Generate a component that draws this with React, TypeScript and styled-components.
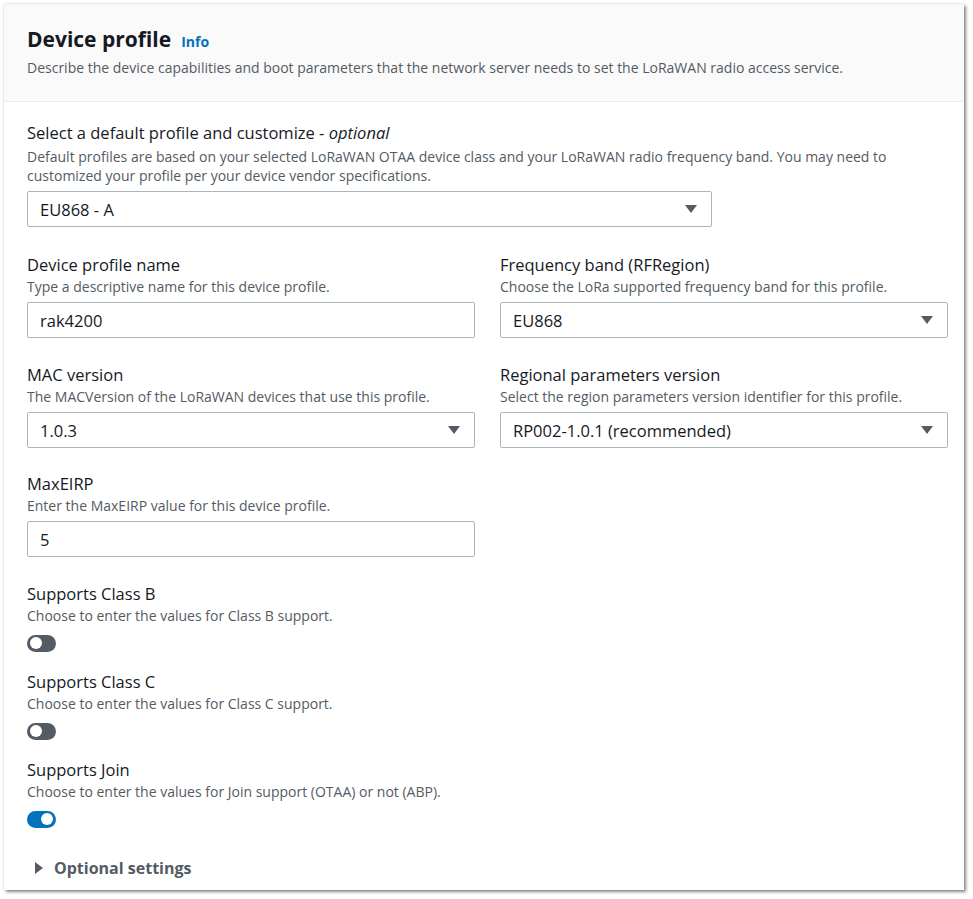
import React from "react";
import styled, { createGlobalStyle } from "styled-components";

const Global = createGlobalStyle`
  html, body { margin: 0; padding: 0; background: #ffffff; }
  body { font-family: "Open Sans", "Noto Sans", Arial, sans-serif; color: #16191f; }
  * { box-sizing: border-box; }
`;

const Page = styled.div`
  padding: 4px 0 0 4px;
  width: 973px;
  height: 899px;
`;

const Card = styled.section`
  width: 960px;
  background: #ffffff;
  box-shadow: 2px 2px 3px rgba(0, 0, 0, 0.45), 0 0 2px rgba(0, 0, 0, 0.2);
  display: flex;
  flex-direction: column;
`;

const Header = styled.header`
  background: #fafafa;
  border-bottom: 1px solid #eaeded;
  padding: 22px 16px 23px 23px;
`;

const TitleRow = styled.div`
  display: flex;
  align-items: baseline;
  gap: 10px;
`;

const Title = styled.h2`
  margin: 0;
  font-size: 21px;
  line-height: 26px;
  font-weight: 700;
  color: #16191f;
`;

const InfoLink = styled.a`
  font-size: 14px;
  font-weight: 700;
  color: #0073bb;
  text-decoration: none;
`;

const HeaderDesc = styled.p`
  margin: 6px 0 0;
  font-size: 14px;
  line-height: 20px;
  color: #545b64;
`;

const Body = styled.div`
  padding: 20px 16px 12px 23px;
  display: flex;
  flex-direction: column;
`;

const Field = styled.div<{ $gap: number }>`
  display: flex;
  flex-direction: column;
  margin-bottom: ${(p) => p.$gap}px;
`;

const Row = styled.div<{ $gap: number }>`
  display: grid;
  grid-template-columns: 448px 448px;
  column-gap: 25px;
  margin-bottom: ${(p) => p.$gap}px;
`;

const Label = styled.label`
  font-size: 16.5px;
  line-height: 22px;
  color: #16191f;
  em { font-style: italic; }
`;

const Desc = styled.div<{ $top?: number }>`
  margin-top: ${(p) => p.$top ?? 1}px;
  font-size: 14px;
  line-height: 19px;
  color: #545b64;
`;

const InputBox = styled.div<{ $width?: number }>`
  margin-top: 6px;
  height: 36px;
  width: ${(p) => (p.$width ? `${p.$width}px` : "100%")};
  border: 1px solid #aab7b8;
  border-radius: 2px;
  background: #ffffff;
  display: flex;
  align-items: center;
  justify-content: space-between;
  padding: 0 14px 0 12px;
  font-size: 16.5px;
  color: #16191f;
`;

const Caret = styled.span`
  width: 0;
  height: 0;
  border-left: 6.5px solid transparent;
  border-right: 6.5px solid transparent;
  border-top: 8.5px solid #545b64;
`;

const ToggleWrap = styled.div`
  margin-top: 9px;
  height: 18px;
  display: flex;
  align-items: center;
`;

const Toggle = styled.span<{ $on?: boolean }>`
  position: relative;
  width: 29px;
  height: 17px;
  border-radius: 9px;
  background: ${(p) => (p.$on ? "#0073bb" : "#545b64")};
  &::after {
    content: "";
    position: absolute;
    top: 2.5px;
    left: ${(p) => (p.$on ? "14px" : "3px")};
    width: 12px;
    height: 12px;
    border-radius: 50%;
    background: #ffffff;
  }
`;

const Expander = styled.div`
  margin-top: 30px;
  display: flex;
  align-items: center;
  gap: 11px;
  padding-left: 8px;
  font-size: 16px;
  line-height: 20px;
  font-weight: 700;
  color: #545b64;
`;

const ExpandCaret = styled.span`
  width: 0;
  height: 0;
  border-top: 6.5px solid transparent;
  border-bottom: 6.5px solid transparent;
  border-left: 8.5px solid #545b64;
`;

function Select({ value, width }: { value: string; width?: number }) {
  return (
    <InputBox $width={width}>
      <span>{value}</span>
      <Caret />
    </InputBox>
  );
}

function ToggleField({ label, desc, on, gap }: { label: string; desc: string; on?: boolean; gap: number }) {
  return (
    <Field $gap={gap}>
      <Label>{label}</Label>
      <Desc>{desc}</Desc>
      <ToggleWrap>
        <Toggle $on={on} />
      </ToggleWrap>
    </Field>
  );
}

export default function App() {
  return (
    <>
      <Global />
      <Page>
        <Card>
          <Header>
            <TitleRow>
              <Title>Device profile</Title>
              <InfoLink>Info</InfoLink>
            </TitleRow>
            <HeaderDesc>
              Describe the device capabilities and boot parameters that the network server needs to set the LoRaWAN radio access service.
            </HeaderDesc>
          </Header>
          <Body>
            <Field $gap={27}>
              <Label>
                Select a default profile and customize - <em>optional</em>
              </Label>
              <Desc $top={3}>
                Default profiles are based on your selected LoRaWAN OTAA device class and your LoRaWAN radio frequency band. You may need to
                <br />
                customized your profile per your device vendor specifications.
              </Desc>
              <Select value="EU868 - A" width={685} />
            </Field>
            <Row $gap={26}>
              <Field $gap={0}>
                <Label>Device profile name</Label>
                <Desc>Type a descriptive name for this device profile.</Desc>
                <InputBox>rak4200</InputBox>
              </Field>
              <Field $gap={0}>
                <Label>Frequency band (RFRegion)</Label>
                <Desc>Choose the LoRa supported frequency band for this profile.</Desc>
                <Select value="EU868" />
              </Field>
            </Row>
            <Row $gap={25}>
              <Field $gap={0}>
                <Label>MAC version</Label>
                <Desc>The MACVersion of the LoRaWAN devices that use this profile.</Desc>
                <Select value="1.0.3" />
              </Field>
              <Field $gap={0}>
                <Label>Regional parameters version</Label>
                <Desc>Select the region parameters version identifier for this profile.</Desc>
                <Select value="RP002-1.0.1 (recommended)" />
              </Field>
            </Row>
            <Field $gap={26}>
              <Label>MaxEIRP</Label>
              <Desc>Enter the MaxEIRP value for this device profile.</Desc>
              <InputBox $width={448}>5</InputBox>
            </Field>
            <ToggleField gap={19} label="Supports Class B" desc="Choose to enter the values for Class B support." />
            <ToggleField gap={19} label="Supports Class C" desc="Choose to enter the values for Class C support." />
            <ToggleField gap={0} on label="Supports Join" desc="Choose to enter the values for Join support (OTAA) or not (ABP)." />
            <Expander>
              <ExpandCaret />
              <span>Optional settings</span>
            </Expander>
          </Body>
        </Card>
      </Page>
    </>
  );
}
